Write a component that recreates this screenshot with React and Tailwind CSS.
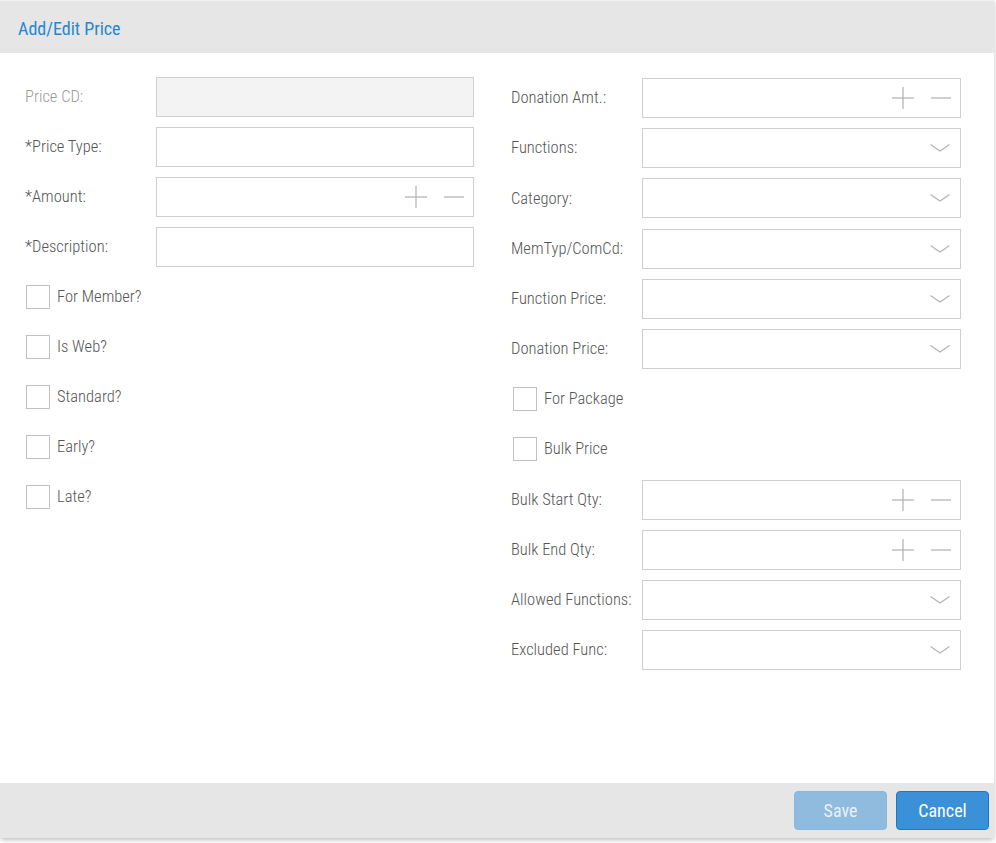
import React from "react";

const FONT = "font-['Roboto_Condensed','DejaVu_Sans_Condensed','Liberation_Sans_Narrow',sans-serif] font-light";

function Plus() {
  return (
    <svg width="22" height="22" viewBox="0 0 22 22" className="block">
      <line x1="0" y1="11" x2="22" y2="11" stroke="#b0b0b0" strokeWidth="1.2" />
      <line x1="11" y1="0" x2="11" y2="22" stroke="#b0b0b0" strokeWidth="1.2" />
    </svg>
  );
}

function Minus() {
  return (
    <svg width="20" height="22" viewBox="0 0 20 22" className="block">
      <line x1="0" y1="11" x2="20" y2="11" stroke="#b0b0b0" strokeWidth="1.2" />
    </svg>
  );
}

function Chevron() {
  return (
    <svg width="20" height="10" viewBox="0 0 20 10" className="block">
      <polyline points="0.5,1.5 10,8 19.5,1.5" fill="none" stroke="#b3b3b3" strokeWidth="1.2" />
    </svg>
  );
}

function Field({ label, kind, disabled }) {
  return (
    <div className="flex items-center h-[40px]">
      <div className={`w-[131px] shrink-0 pt-[1px] text-[16.5px] whitespace-nowrap ${disabled ? "text-[#9a9a9a]" : "text-[#555555]"}`}>{label}</div>
      <div
        className={`h-full flex-1 border border-[#cfcfcf] flex items-center justify-end ${disabled ? "bg-[#f3f3f3]" : "bg-white"} ${kind === "num" ? "pr-[9px] gap-[17px]" : "pr-[10px]"}`}
      >
        {kind === "num" && (
          <>
            <Plus />
            <Minus />
          </>
        )}
        {kind === "select" && <Chevron />}
      </div>
    </div>
  );
}

function Check({ label, right }) {
  return (
    <div className="flex items-center h-[40px]">
      <div className={`w-[24px] h-[24px] border border-[#c2c2c2] bg-white ${right ? "ml-[2px]" : "ml-[1px]"}`} />
      <div className="ml-[7px] pt-[1px] text-[16.5px] text-[#555555]">{label}</div>
    </div>
  );
}

export default function App() {
  return (
    <div className={`${FONT} bg-white w-[996px] h-[843px]`}>
      <div className="w-[994px] h-[838px] flex flex-col bg-white rounded-b-[4px] shadow-[0_2px_4px_rgba(0,0,0,0.25)] border-t border-[#f0f0f0]">
        <div className="h-[52px] bg-[#e6e6e6] flex items-center pl-[18px] pt-[2px] text-[18px] text-[#2586d3] font-normal">
          Add/Edit Price
        </div>
        <div className="flex-1 pt-[24px] pl-[25px] grid grid-cols-[449px_450px] gap-x-[37px] items-start">
          <div className="flex flex-col gap-[10px]">
            <Field label="Price CD:" kind="text" disabled />
            <Field label="*Price Type:" kind="text" />
            <Field label="*Amount:" kind="num" />
            <Field label="*Description:" kind="text" />
            <Check label="For Member?" />
            <Check label="Is Web?" />
            <Check label="Standard?" />
            <Check label="Early?" />
            <Check label="Late?" />
          </div>
          <div className="flex flex-col gap-[10.2px] pt-[1px]">
            <Field label="Donation Amt.:" kind="num" />
            <Field label="Functions:" kind="select" />
            <Field label="Category:" kind="select" />
            <Field label="MemTyp/ComCd:" kind="select" />
            <Field label="Function Price:" kind="select" />
            <Field label="Donation Price:" kind="select" />
            <Check label="For Package" right />
            <Check label="Bulk Price" right />
            <Field label="Bulk Start Qty:" kind="num" />
            <Field label="Bulk End Qty:" kind="num" />
            <Field label="Allowed Functions:" kind="select" />
            <Field label="Excluded Func:" kind="select" />
          </div>
        </div>
        <div className="h-[55px] bg-[#e6e6e6] rounded-b-[4px] flex items-center justify-end gap-[9px] pr-[5px]">
          <button className="w-[93px] h-[39px] rounded-[4px] bg-[#8fbbdf] border border-[#8ab7dc] text-[18px] text-[#e9f2fa] font-normal">
            Save
          </button>
          <button className="w-[93px] h-[39px] rounded-[4px] bg-[#3a91d8] border border-[#2277c4] text-[18px] text-white font-normal">
            Cancel
          </button>
        </div>
      </div>
    </div>
  );
}
